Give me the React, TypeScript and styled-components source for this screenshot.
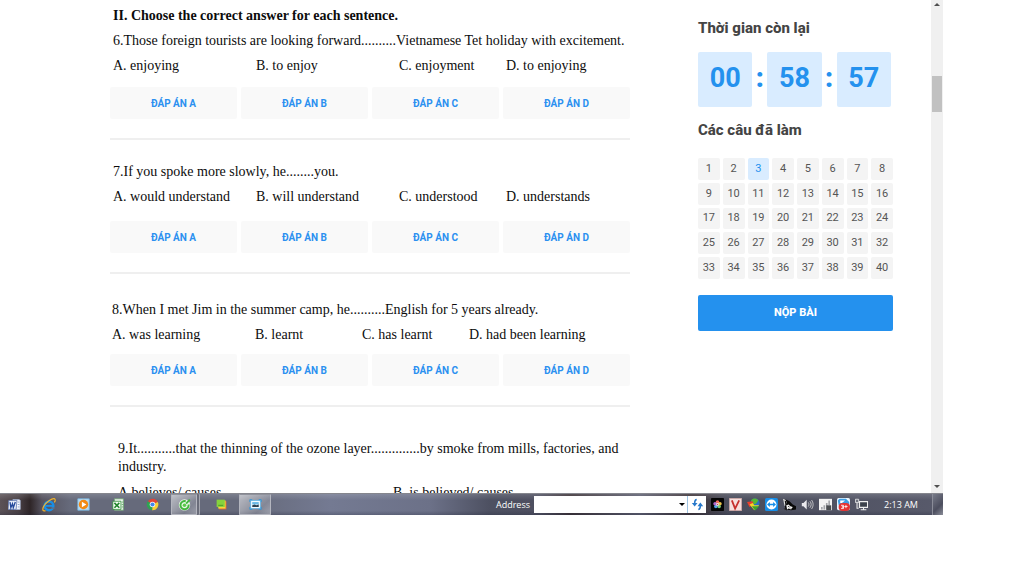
import React from "react";
import styled, { createGlobalStyle, css } from "styled-components";

const GlobalStyle = createGlobalStyle`
  *, *::before, *::after { box-sizing: border-box; }
  body { margin: 0; background: #fff; font-family: Roboto, sans-serif; }
  button, input { font: inherit; margin: 0; padding: 0; border: 0; }
  button { cursor: pointer; background: none; color: inherit; }
  h2, p { margin: 0; }
  svg { display: block; }
`;

const Desktop = styled.div`
  display: flex;
  flex-direction: column;
  height: calc(100vh - 61px);
  margin-right: 81px;
`;

const Browser = styled.div`
  display: flex;
  flex: 1;
  min-height: 0;
`;

const Page = styled.div`
  display: flex;
  flex: 1;
  gap: 68px;
  min-width: 0;
  padding: 0 38px 0 110px;
  overflow: hidden;
`;

const Quiz = styled.main`
  flex: 1;
  min-width: 0;
  padding-top: 3px;
  color: #0c0c0c;
  font-family: "Liberation Serif", serif;
  font-size: 14px;
  line-height: 25px;
`;

const SectionTitle = styled.h2`
  padding-left: 3px;
  font-size: 14px;
  font-weight: bold;
`;

const Question = styled.section<{ $top: number; $indent: number }>`
  padding-top: ${(p) => p.$top}px;

  & > p,
  & > ul {
    padding-left: ${(p) => p.$indent}px;
  }
`;

const Prompt = styled.p<{ $tight?: boolean }>`
  ${(p) =>
    p.$tight &&
    css`
      line-height: 18px;
      padding-bottom: 4px;
    `}
`;

const Choices = styled.ul<{ $columns: string }>`
  display: grid;
  grid-template-columns: ${(p) => p.$columns};
  margin: 0;
  padding: 0;
  list-style: none;
  white-space: nowrap;
`;

const AnswerRow = styled.div<{ $top: number }>`
  display: grid;
  grid-template-columns: repeat(4, 1fr);
  gap: 4px;
  padding: ${(p) => p.$top}px 0 19px;
  border-bottom: 2px solid #efefef;
`;

const AnswerButton = styled.button`
  height: 32px;
  padding-top: 1px;
  border-radius: 2px;
  background: #f9f9f9;
  color: #2b90f0;
  font-family: Roboto, sans-serif;
  font-size: 10px;
  font-weight: 700;
  line-height: 12px;
`;

const Sidebar = styled.aside`
  flex: 0 0 195px;
  padding-top: 18px;
`;

const SideTitle = styled.h2`
  color: #444;
  font-size: 15px;
  font-weight: 800;
  line-height: 20px;
`;

const Timer = styled.div`
  display: flex;
  align-items: center;
  padding: 14px 2px 13px 0;
  color: #2491ee;
  font-size: 27px;
  font-weight: 700;
`;

const TimeBox = styled.span`
  flex: 1;
  padding-bottom: 3px;
  border-radius: 2px;
  background: #d9ecff;
  line-height: 52px;
  text-align: center;
`;

const Colon = styled.span`
  flex: 0 0 15px;
  padding-bottom: 3px;
  font-weight: 900;
  line-height: 52px;
  text-align: center;
`;

const NumberGrid = styled.div`
  display: grid;
  grid-template-columns: repeat(8, 1fr);
  gap: 3px;
  padding: 18px 0 16px;
`;

const NumberButton = styled.button<{ $done: boolean }>`
  aspect-ratio: 1;
  border-radius: 2px;
  background: ${(p) => (p.$done ? "#d9ecff" : "#f4f4f4")};
  color: ${(p) => (p.$done ? "#2491ee" : "#555")};
  font-size: 11px;
  line-height: 12px;
`;

const SubmitButton = styled.button`
  width: 100%;
  height: 36px;
  border-radius: 2px;
  background: #2491ee;
  color: #fff;
  font-size: 11px;
  font-weight: 800;
`;

const ScrollTrack = styled.div`
  display: flex;
  flex: 0 0 12px;
  flex-direction: column;
  align-items: center;
  padding-bottom: 2px;
  background: #f0f0f0;
`;

const ScrollArrow = styled.button`
  display: grid;
  place-items: center;
  width: 12px;
  height: 9px;
`;

const ScrollThumb = styled.div`
  width: 10px;
  height: 36px;
  margin: 67px 0 auto;
  background: #c1c1c1;
`;

const Taskbar = styled.footer`
  display: flex;
  flex: 0 0 22px;
  color: #fff;
  border-top: 1px solid #85868d;
  background:
    linear-gradient(rgba(255, 255, 255, 0.14), transparent 30%, transparent 80%, rgba(30, 34, 55, 0.25)),
    linear-gradient(90deg, #5b5257 0, #4a4146 18px, #2e2527 30px, #55525e 42px, #666a7b 70px, #666a7b 250px, #747a92 330px, #6c7188 430px, #4d5061 490px, #4e4f60 540px, #3c3237 570px, #5c5e70 640px, #3c3237 690px, #4a4d5c 730px, #585a6b 100%);
`;

const Launcher = styled.nav`
  display: flex;
  flex: 1;
  align-items: stretch;
  min-width: 0;
`;

const TaskButton = styled.button<{ $width: number; $active?: boolean; $stacked?: boolean }>`
  display: grid;
  place-items: center;
  flex: 0 0 ${(p) => p.$width}px;
  ${(p) =>
    p.$active &&
    css`
      border: 1px solid #b4b6bf;
      border-top-color: #8f919b;
      border-radius: 1px;
      background: linear-gradient(135deg, rgba(255, 255, 255, 0.55), rgba(255, 255, 255, 0.18) 70%, rgba(255, 255, 255, 0.35));
    `}
  ${(p) =>
    p.$stacked &&
    css`
      margin: 0 6px 0 5px;
      box-shadow: 2px 0 0 #6a6d7a, 3px 0 0 #a5a7b0;
    `}
`;

const AddressBar = styled.label`
  display: flex;
  align-items: center;
  gap: 4px;
  font-family: "Open Sans", sans-serif;
  font-size: 9px;
`;

const AddressField = styled.span`
  display: flex;
  height: 17px;
  background: #fff;
`;

const AddressInput = styled.input`
  width: 142px;
  background: #fff;
  outline: none;
`;

const FieldButton = styled.button<{ $width: number; $divided?: boolean }>`
  display: grid;
  place-items: center;
  width: ${(p) => p.$width}px;
  border-left: ${(p) => (p.$divided ? "1px solid #9fc4e4" : "0")};
`;

const Tray = styled.div`
  display: flex;
  align-items: center;
  padding-left: 2px;
`;

const TrayButton = styled.button`
  display: grid;
  place-items: center;
  width: 18px;
  height: 20px;
`;

const Clock = styled.time`
  width: 62px;
  font-family: "Open Sans", sans-serif;
  font-size: 9px;
  text-align: center;
`;

const ShowDesktop = styled.button`
  align-self: stretch;
  width: 11px;
  border-left: 1px solid #8a8c98;
  background: linear-gradient(135deg, #777a88, #4c4e5e 60%, #8b8d99);
`;

const questions = [
  {
    top: 0,
    indent: 3,
    text: "6.Those foreign tourists are looking forward..........Vietnamese Tet holiday with excitement.",
    choices: ["A. enjoying", "B. to enjoy", "C. enjoyment", "D. to enjoying"],
    columns: "143px 143px 107px auto",
    answersTop: 9,
  },
  {
    top: 19,
    indent: 3,
    text: "7.If you spoke more slowly, he........you.",
    choices: ["A. would understand", "B. will understand", "C. understood", "D. understands"],
    columns: "143px 143px 107px auto",
    answersTop: 12,
  },
  {
    top: 23,
    indent: 2,
    text: "8.When I met Jim in the summer camp, he..........English for 5 years already.",
    choices: ["A. was learning", "B. learnt", "C. has learnt", "D. had been learning"],
    columns: "143px 107px 107px auto",
    answersTop: 7,
  },
  {
    top: 33,
    indent: 8,
    tight: true,
    text: "9.It...........that the thinning of the ozone layer..............by smoke from mills, factories, and industry.",
    choices: ["A.believes/ causes", "B. is believed/ causes"],
    columns: "275px auto",
    answersTop: 9,
  },
];

const Icon = ({ size = 13, children }: { size?: number; children: React.ReactNode }) => (
  <svg width={size} height={size} viewBox="0 0 16 16" fill="none" aria-hidden="true">
    {children}
  </svg>
);

const WordIcon = () => (
  <Icon>
    <path d="M6 2h8l1 1v11H6z" fill="#f7f9fd" stroke="#a9b7d8" />
    <path d="M12 5h2M12 8h2M12 11h2" stroke="#7891c8" />
    <path d="M1 3h10l-1 11H0z" fill="#e7edf8" stroke="#6179b1" />
    <path d="M2.500 5l1 7 2-5 1 5 2.500-7" stroke="#24499b" strokeWidth="1.600" />
  </Icon>
);

const IeIcon = () => (
  <Icon size={14}>
    <circle cx="8" cy="9" r="5" stroke="#198fe5" strokeWidth="2.800" />
    <path d="M4 9h9" stroke="#198fe5" strokeWidth="2.200" />
    <path d="M10 11.500h5" stroke="#666a7b" strokeWidth="1.400" />
    <path d="M4 14.500c-3 1-4-1-2-5C5 4 12 0 14.500 1c1 1 .5 3-.5 4" stroke="#f1b42a" strokeWidth="1.400" />
  </Icon>
);

const PlayerIcon = () => (
  <Icon>
    <path d="M1 1h14v14H1z" fill="#b9dcf5" stroke="#79b7e3" />
    <circle cx="8" cy="8" r="5.800" fill="#f28a14" />
    <path d="M6 4.500L11.500 8 6 11.500z" fill="#fff" />
  </Icon>
);

const ExcelIcon = () => (
  <Icon>
    <path d="M3 1h11v14H3z" fill="#eef8ee" stroke="#75aa78" />
    <path d="M12 5h2M12 8h2M12 11h2" stroke="#5eaa63" />
    <path d="M1 4h10v10H1z" fill="#f8fff7" stroke="#2f8e39" />
    <path d="M3 6l6 6M9 6l-6 6" stroke="#21862c" strokeWidth="2" />
  </Icon>
);

const ChromeIcon = () => (
  <Icon>
    <path d="M8 8L2.200 4A7 7 0 0 1 14.500 5z" fill="#e34436" />
    <path d="M8 8l6.500-3A7 7 0 0 1 7.500 15z" fill="#f9cf36" />
    <path d="M8 8l-.5 7A7 7 0 0 1 2.200 4z" fill="#2fa452" />
    <circle cx="8" cy="8" r="3.400" fill="#fff" />
    <circle cx="8" cy="8" r="2.600" fill="#4387ed" />
  </Icon>
);

const CocCocIcon = () => (
  <Icon>
    <circle cx="8" cy="8.500" r="7" fill="#e8f7e4" />
    <path d="M9.500 4A5 5 0 1 0 13 8" stroke="#43b83d" strokeWidth="2.400" />
    <circle cx="8" cy="9" r="2.200" fill="#5cc94b" />
    <path d="M10 7l4.500-5" stroke="#43b83d" strokeWidth="2.200" />
  </Icon>
);

const NotesIcon = () => (
  <Icon>
    <path d="M5 4h9v10H5z" fill="#e8682d" />
    <path d="M4 3h9v10H4z" fill="#f3d83c" />
    <path d="M2 2h10v9H2z" fill="#86d23d" />
    <path d="M4 9h6" stroke="#3c8d24" />
  </Icon>
);

const ViewerIcon = () => (
  <Icon>
    <path d="M2 3h12v10H2z" fill="#f3fbff" stroke="#5eb5e9" />
    <path d="M4 5h8v3H4z" fill="#68b9e6" />
    <path d="M4 11V9l3-1 2 1 3-1v3z" fill="#2b4050" />
    <path d="M1 5V2h3M12 2h3v3M15 11v3h-3M4 14H1v-3" stroke="#2c96db" />
  </Icon>
);

const RefreshIcon = () => (
  <Icon>
    <path d="M7 2C5 2 4.500 4 4.500 7" stroke="#2778ca" strokeWidth="2" />
    <path d="M1 6h7l-3.500 4.500z" fill="#2778ca" />
    <path d="M9 14c2 0 2.500-2 2.500-5" stroke="#2778ca" strokeWidth="2" />
    <path d="M8 10h7l-3.500-4.500z" fill="#2778ca" />
  </Icon>
);

const FlowerIcon = () => (
  <Icon>
    <rect width="16" height="16" rx="1" fill="#050505" />
    <circle cx="8" cy="5" r="2.200" fill="#f26a5d" />
    <circle cx="11" cy="7" r="2.200" fill="#efc44b" />
    <circle cx="10" cy="10.500" r="2.200" fill="#7fcf74" />
    <circle cx="6" cy="10.500" r="2.200" fill="#54a4e6" />
    <circle cx="5" cy="7" r="2.200" fill="#b26bcf" />
    <circle cx="8" cy="8" r="1.800" fill="#fff" />
    <circle cx="8" cy="8" r="1" fill="#c23b58" />
  </Icon>
);

const UnikeyIcon = () => (
  <Icon>
    <path d="M.5.5h15v15H.5z" fill="#f6dfdd" stroke="#d3aaa8" />
    <path d="M3.500 3l4 10L12.500 3" stroke="#c62f2c" strokeWidth="2.200" />
  </Icon>
);

const IdmIcon = () => (
  <Icon>
    <circle cx="10" cy="6" r="5.500" fill="#2a6fc4" />
    <path d="M5 3c2-3 7-3 9 0l-3 4-4 1z" fill="#58b934" />
    <path d="M0 5l7-1 1 4-5 3z" fill="#e93f2d" />
    <path d="M3 8l4-2 2 3h6l-6 6z" fill="#f0d628" />
    <path d="M6 10h9l-5 5.500z" fill="#38a532" />
  </Icon>
);

const TeamViewerIcon = () => (
  <Icon>
    <rect width="16" height="16" rx="2" fill="#178ee8" />
    <circle cx="8" cy="8" r="6.200" fill="#fff" />
    <path d="M2.500 8L6 5v2h4V5l3.500 3-3.500 3V9H6v2z" fill="#178ee8" />
  </Icon>
);

const CatIcon = () => (
  <Icon>
    <path d="M0 1l4 1 4 2 4 4 4 2v4l-6 1-7-1-1-6z" fill="#080808" />
    <path d="M0 1l3 1 2 4-3 4z" fill="#e8e8e8" />
    <path d="M2 3l2 1 1 4-2 1z" fill="#111" />
    <path d="M4 9l3-1 2 2 3 1-2 3-3-1-2 1z" fill="#f5f5f5" />
    <path d="M6 10l2 1M9 12l1 1M1 13l4 2" stroke="#222" />
  </Icon>
);

const SpeakerIcon = () => (
  <Icon>
    <path d="M1 6h2l4-4v12l-4-4H1z" fill="#e9e9ed" />
    <path d="M9 5.500c1 1.500 1 3.500 0 5M11 4c2 2.500 2 5.500 0 8M13 2.500c2.500 3.500 2.500 7.500 0 11" stroke="#ddd" />
  </Icon>
);

const ChartIcon = () => (
  <Icon>
    <path d="M0 1h16v14H0z" fill="#f3f3f3" />
    <path d="M3.500 14v-3M6.500 14V9M9.500 14V6M12.500 9V3" stroke="#a4a6aa" strokeWidth="2" />
    <path d="M9 9h6v6H9z" fill="#4a4d50" />
  </Icon>
);

const ZaloIcon = () => (
  <Icon>
    <rect width="16" height="15" rx="2" fill="#eaf6ff" />
    <path d="M1 3l2-2h8l4 4v7H9L2 9z" fill="#3f9fe4" />
    <path d="M4 3h6l-4 3H4z" fill="#fff" />
    <rect x="2" y="6" width="14" height="10" rx="5" fill="#e43332" />
    <path d="M5 9h3v2H6h2v2H5M11 8.500v4M9 10.500h4" stroke="#fff" />
  </Icon>
);

const NetworkIcon = () => (
  <Icon>
    <path d="M5.500 4.500h10v7h-10z" fill="#3b414b" stroke="#eee" strokeWidth="1.500" />
    <path d="M7 14.500h7M10.500 12v2M2.500 6v6.500h2" stroke="#eee" strokeWidth="1.300" />
    <path d="M.5 1.500h4v4h-4z" fill="#6d717d" stroke="#eee" />
  </Icon>
);

const Triangle = ({ up = false, color = "#505050" }: { up?: boolean; color?: string }) => (
  <svg width="6" height="3" viewBox="0 0 6 3" aria-hidden="true">
    <path d={up ? "M0 3h6L3 0z" : "M0 0h6L3 3z"} fill={color} />
  </svg>
);

const tasks = [
  { name: "Word", width: 28, icon: <WordIcon /> },
  { name: "Internet Explorer", width: 42, icon: <IeIcon /> },
  { name: "Media Player", width: 27, icon: <PlayerIcon /> },
  { name: "Excel", width: 42, icon: <ExcelIcon /> },
  { name: "Chrome", width: 27, icon: <ChromeIcon /> },
];

const trayItems = [
  { name: "Photos", icon: <FlowerIcon /> },
  { name: "Keyboard", icon: <UnikeyIcon /> },
  { name: "Downloads", icon: <IdmIcon /> },
  { name: "Remote support", icon: <TeamViewerIcon /> },
  { name: "Utility", icon: <CatIcon /> },
  { name: "Volume", icon: <SpeakerIcon /> },
  { name: "Performance", icon: <ChartIcon /> },
  { name: "Messages", icon: <ZaloIcon /> },
  { name: "Network", icon: <NetworkIcon /> },
];

const answerLetters = ["A", "B", "C", "D"];
const answered = new Set([3]);

export default function App() {
  return (
    <>
      <GlobalStyle />
      <Desktop>
        <Browser>
          <Page>
            <Quiz>
              <SectionTitle>II. Choose the correct answer for each sentence.</SectionTitle>
              {questions.map((q) => (
                <Question key={q.text} $top={q.top} $indent={q.indent}>
                  <Prompt $tight={q.tight}>{q.text}</Prompt>
                  <Choices $columns={q.columns}>
                    {q.choices.map((choice) => (
                      <li key={choice}>{choice}</li>
                    ))}
                  </Choices>
                  {q.choices.length === 4 && (
                    <AnswerRow $top={q.answersTop}>
                      {answerLetters.map((letter) => (
                        <AnswerButton key={letter}>ĐÁP ÁN {letter}</AnswerButton>
                      ))}
                    </AnswerRow>
                  )}
                </Question>
              ))}
            </Quiz>
            <Sidebar>
              <SideTitle>Thời gian còn lại</SideTitle>
              <Timer>
                <TimeBox>00</TimeBox>
                <Colon>:</Colon>
                <TimeBox>58</TimeBox>
                <Colon>:</Colon>
                <TimeBox>57</TimeBox>
              </Timer>
              <SideTitle>Các câu đã làm</SideTitle>
              <NumberGrid>
                {Array.from({ length: 40 }, (_, i) => i + 1).map((n) => (
                  <NumberButton key={n} $done={answered.has(n)}>
                    {n}
                  </NumberButton>
                ))}
              </NumberGrid>
              <SubmitButton>NỘP BÀI</SubmitButton>
            </Sidebar>
          </Page>
          <ScrollTrack>
            <ScrollArrow aria-label="Scroll up">
              <Triangle up />
            </ScrollArrow>
            <ScrollThumb />
            <ScrollArrow aria-label="Scroll down">
              <Triangle />
            </ScrollArrow>
          </ScrollTrack>
        </Browser>
        <Taskbar>
          <Launcher>
            {tasks.map((task) => (
              <TaskButton key={task.name} $width={task.width} aria-label={task.name}>
                {task.icon}
              </TaskButton>
            ))}
            <TaskButton $width={26} $active $stacked aria-label="Browser">
              <CocCocIcon />
            </TaskButton>
            <TaskButton $width={36} aria-label="Notes">
              <NotesIcon />
            </TaskButton>
            <TaskButton $width={32} $active aria-label="Picture viewer">
              <ViewerIcon />
            </TaskButton>
          </Launcher>
          <AddressBar>
            Address
            <AddressField>
              <AddressInput type="text" />
              <FieldButton $width={11} type="button" aria-label="Show addresses">
                <Triangle color="#000" />
              </FieldButton>
              <FieldButton $width={19} $divided type="button" aria-label="Refresh">
                <RefreshIcon />
              </FieldButton>
            </AddressField>
          </AddressBar>
          <Tray>
            {trayItems.map((item) => (
              <TrayButton key={item.name} aria-label={item.name}>
                {item.icon}
              </TrayButton>
            ))}
            <Clock>2:13 AM</Clock>
            <ShowDesktop aria-label="Show desktop" />
          </Tray>
        </Taskbar>
      </Desktop>
    </>
  );
}
